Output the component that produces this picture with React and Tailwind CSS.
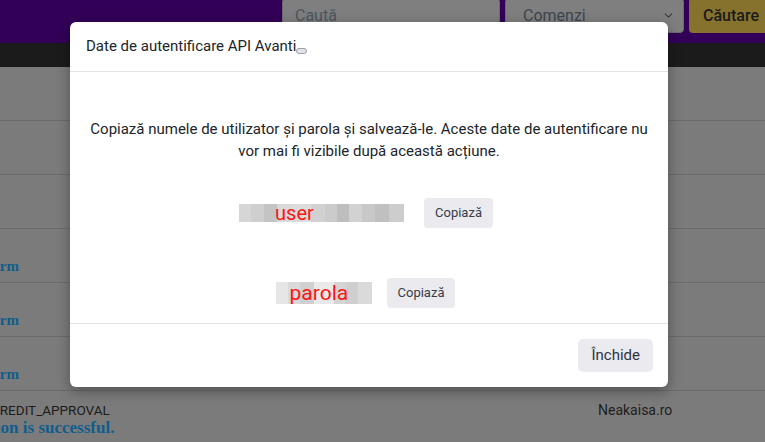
import { ChevronDown } from 'lucide-react';

const userCells = [
  ['#d6d6d6', 12], ['#cfcfcf', 13], ['#c4c4c4', 13], ['#d9d9d9', 14], ['#dcdcdc', 20], ['#d1d1d1', 14],
  ['#cbcbcb', 12], ['#bebebe', 12], ['#d2d2d2', 13], ['#c8c8c8', 13], ['#c0c0c0', 14], ['#cdcdcd', 15],
];
const passCells = [
  ['#e6e6e6', 12], ['#dadada', 12], ['#d0d0d0', 14], ['#e9e9e9', 20], ['#d4d4d4', 12], ['#cfcfcf', 12], ['#dadada', 14],
];

function Masked({ cells, label, height, textClass, textLeft }) {
  return (
    <div className="relative flex" style={{ height }}>
      {cells.map(([c, w], i) => (
        <span key={i} className="h-full" style={{ width: w, backgroundColor: c }} />
      ))}
      <span className={`absolute top-1/2 -translate-y-1/2 leading-none text-[#ff1414] ${textClass}`} style={{ left: textLeft }}>
        {label}
      </span>
    </div>
  );
}

function Row({ children, last }) {
  return (
    <div className={`h-[54px] bg-[#7b7b7b] ${last ? '' : 'border-b border-[#6b6b6b]'} flex flex-col justify-end pb-[6px] overflow-hidden`}>
      {children}
    </div>
  );
}

export default function App() {
  return (
    <div className="relative w-[765px] h-[442px] overflow-hidden bg-[#7b7b7b] font-['Roboto',sans-serif]">
      {/* Top navbar (behind backdrop) */}
      <div className="h-[43px] bg-[#320058] flex items-start justify-end gap-[5px] pl-[282px]">
        <div className="-mt-[2px] w-[218px] h-[35px] bg-[#7f7f7f] border border-[#6d6d6d] rounded-[4px] px-3 flex items-center text-[16px] text-[#4c5661]">
          Caută
        </div>
        <div className="-mt-[2px] w-[179px] h-[35px] bg-[#7f7f7f] border border-[#6d6d6d] rounded-[4px] pl-[17px] pr-2 flex items-center justify-between text-[16px] text-[#3d4550]">
          <span>Comenzi</span>
          <ChevronDown size={13} strokeWidth={2} className="text-[#3a3a3a]" />
        </div>
        <div className="-mt-[2px] flex-1 h-[35px] bg-[#86722d] rounded-l-[4px] pl-[14px] flex items-center text-[16px] font-medium text-[#1a1a1a]">
          Căutare
        </div>
      </div>
      <div className="h-[24px] bg-[#1b1b1b]" />

      {/* Table rows (behind backdrop) */}
      <div className="flex flex-col">
        <Row />
        <Row />
        <Row />
        <Row>
          <span className="ml-[-36px] font-['Liberation_Serif',serif] font-bold text-[15px] text-[#0f5d8d] leading-5">Confirm</span>
        </Row>
        <Row>
          <span className="ml-[-36px] font-['Liberation_Serif',serif] font-bold text-[15px] text-[#0f5d8d] leading-5">Confirm</span>
        </Row>
        <Row>
          <span className="ml-[-36px] font-['Liberation_Serif',serif] font-bold text-[15px] text-[#0f5d8d] leading-5">Confirm</span>
        </Row>
        <div className="h-[51px] bg-[#7b7b7b] pt-[11px] relative">
          <div className="flex items-center">
            <span className="ml-[-9px] w-[607px] text-[13.5px] text-[#1c1c1c] leading-4">CREDIT_APPROVAL</span>
            <span className="text-[14px] text-[#1e1e1e] leading-4">Neakaisa.ro</span>
          </div>
          <div className="ml-[-68px] font-['Liberation_Serif',serif] font-bold text-[17px] text-[#0f5d8d] leading-5">Transaction is successful.</div>
        </div>
      </div>

      {/* Modal */}
      <div className="absolute left-[70px] top-[22px] w-[598px] bg-white rounded-[6px] shadow-[0_4px_14px_rgba(0,0,0,0.35)] text-[#212529]">
        <div className="h-[50px] border-b border-[#e3e3e3] px-4 flex items-center">
          <span className="text-[15px]">Date de autentificare API Avanti</span>
          <span className="mt-[9px] w-[11px] h-[6px] rounded-[3px] border border-[#9aa0a6] bg-[#e2e4e8]" />
        </div>
        <div className="h-[251px] px-4 pt-[46px] flex flex-col items-center">
          <p className="text-[15px] leading-[22px] text-center px-1">
            Copiază numele de utilizator și parola și salvează-le. Aceste date de autentificare nu vor mai fi vizibile după această acțiune.
          </p>
          <div className="mt-[36px] flex items-center gap-[20px] -ml-[6px]">
            <Masked cells={userCells} label="user" height={18} textClass="text-[20px]" textLeft={36} />
            <button className="h-[30px] px-[11px] rounded-[4px] bg-[#eaeaef] text-[13px] text-[#373c48]">Copiază</button>
          </div>
          <div className="mt-[50px] flex items-center gap-[15px] -ml-[7px]">
            <Masked cells={passCells} label="parola" height={22} textClass="text-[21px]" textLeft={14} />
            <button className="h-[30px] px-[11px] rounded-[4px] bg-[#eaeaef] text-[13px] text-[#373c48]">Copiază</button>
          </div>
        </div>
        <div className="h-[64px] border-t border-[#e3e3e3] px-[15px] flex items-center justify-end">
          <button className="h-[33px] px-[13px] rounded-[5px] bg-[#eaeaef] text-[15px] text-[#2f3340]">Închide</button>
        </div>
      </div>
    </div>
  );
}
